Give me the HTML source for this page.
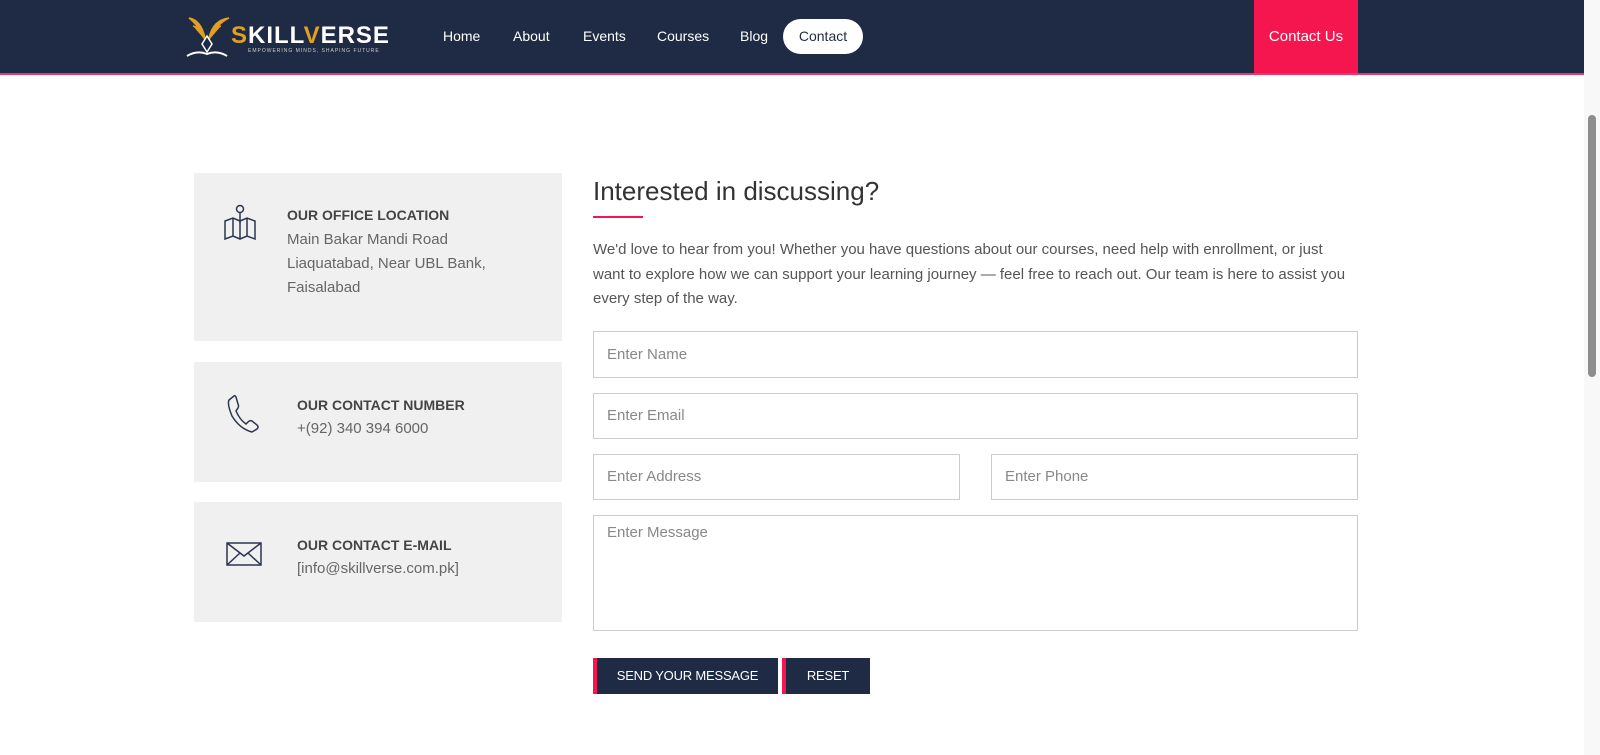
<!DOCTYPE html>
<html><head><meta charset="utf-8"><style>
*{box-sizing:border-box;margin:0;padding:0}
body{width:1600px;height:755px;overflow:hidden;background:#fff;font-family:"Liberation Sans",sans-serif;position:relative}
.nav{position:absolute;left:0;top:0;width:1584px;height:75px;background:#1f2a44;border-bottom:2px solid #e8386a}
.nav a{position:absolute;top:28px;color:#fff;font-size:14px;text-decoration:none}
.pill{position:absolute;left:783px;top:19px;width:80px;height:35px;background:#fff;border-radius:18px;color:#1f2a44;font-size:14px;text-align:center;line-height:35px}
.cu{position:absolute;left:1254px;top:0;width:104px;height:73px;background:#f5154f;color:#fff;font-size:15px;text-align:center;line-height:73px}
.sb{position:absolute;left:1584px;top:0;width:16px;height:755px;background:#f8f8f8}
.th{position:absolute;left:1588px;top:115px;width:8px;height:262px;background:#8e8e8e;border-radius:4px}
.card{position:absolute;left:194px;width:368px;background:#f0f0f0}
.card h4{position:absolute;font-size:14px;font-weight:bold;color:#444}
.card p{position:absolute;font-size:15px;color:#666;line-height:24px}
.card svg{position:absolute}
.f{position:absolute;border:1px solid #ccc;background:#fff;font-size:15px;color:#888;padding-left:13px}
.btn{position:absolute;top:658px;height:36px;background:#1f2a44;border-left:4px solid #f5154f;color:#fff;font-size:13px;text-align:center;line-height:36px;letter-spacing:-0.2px}
</style></head><body>
<div class="nav">
<svg style="position:absolute;left:185px;top:14px" width="45" height="44" viewBox="0 0 45 44"><path d="M4 4 Q16 6 20 24 Q12 10 4 4Z M24 24 Q28 6 44 4 Q32 10 24 24Z M8 12 Q16 14 20 26 M36 12 Q28 14 24 26" fill="#e0a020" stroke="#e0a020" stroke-width="1.5"/><path d="M22 22 L27 30 L22 38 L17 30Z" fill="none" stroke="#fff" stroke-width="1.5"/><path d="M2 42 Q12 36 22 40 Q32 36 42 42" fill="none" stroke="#fff" stroke-width="2"/></svg>
<div style="position:absolute;left:231px;top:22px;font-size:24px;font-weight:bold;letter-spacing:1px;color:#fff"><span style="color:#e0a020">S</span>KILL<span style="color:#e0a020">V</span>ERSE</div>
<div style="position:absolute;left:248px;top:48px;font-size:5px;color:#ccc;letter-spacing:1px">EMPOWERING MINDS, SHAPING FUTURE</div>
<a style="left:443px">Home</a><a style="left:513px">About</a><a style="left:583px">Events</a><a style="left:657px">Courses</a><a style="left:740px">Blog</a>
<div class="pill">Contact</div>
<div class="cu">Contact Us</div>
</div>
<div class="sb"></div><div class="th"></div>

<div class="card" style="top:173px;height:168px">
<svg style="left:28px;top:30px" width="36" height="40" viewBox="0 0 36 40" fill="none" stroke="#2b3550" stroke-width="1.5"><circle cx="18" cy="6" r="3.5"/><path d="M18 10V20"/><path d="M3 18L11 15L18 18L25 15L33 18V36L25 33L18 36L11 33L3 36Z M11 15V33 M18 18V36 M25 15V33"/></svg>
<h4 style="left:93px;top:34px">OUR OFFICE LOCATION</h4>
<p style="left:93px;top:55px">Main Bakar Mandi Road<br>Liaquatabad, Near UBL Bank,<br>Faisalabad</p>
</div>
<div class="card" style="top:362px;height:120px">
<svg style="left:32px;top:32px" width="36" height="40" viewBox="0 0 36 40" fill="none" stroke="#2b3550" stroke-width="1.5"><path d="M8 2L3 6Q1 10 6 22Q14 35 26 38L31 35Q33 33 31 31L26 27Q24 26 22 28L20 30Q14 26 10 17L12 14Q13 12 12 10L10 3Q9 1 8 2Z"/></svg>
<h4 style="left:103px;top:35px">OUR CONTACT NUMBER</h4>
<p style="left:103px;top:55px">+(92) 340 394 6000</p>
</div>
<div class="card" style="top:502px;height:120px">
<svg style="left:32px;top:40px" width="36" height="26" viewBox="0 0 36 26" fill="none" stroke="#2b3550" stroke-width="1.5"><rect x="1" y="1" width="34" height="22"/><path d="M1 1L18 14L35 1 M1 23L14 11 M35 23L22 11"/></svg>
<h4 style="left:103px;top:35px">OUR CONTACT E-MAIL</h4>
<p style="left:103px;top:55px">[info@skillverse.com.pk]</p>
</div>

<div style="position:absolute;left:593px;top:176px;font-size:26px;color:#333">Interested in discussing?</div>
<div style="position:absolute;left:593px;top:216px;width:50px;height:2px;background:#f5154f"></div>
<div style="position:absolute;left:593px;top:238px;width:760px;font-size:15px;line-height:24.5px;color:#555">We'd love to hear from you! Whether you have questions about our courses, need help with enrollment, or just want to explore how we can support your learning journey — feel free to reach out. Our team is here to assist you every step of the way.</div>
<div class="f" style="left:593px;top:331px;width:765px;height:47px;line-height:45px">Enter Name</div>
<div class="f" style="left:593px;top:393px;width:765px;height:46px;line-height:44px">Enter Email</div>
<div class="f" style="left:593px;top:454px;width:367px;height:46px;line-height:44px">Enter Address</div>
<div class="f" style="left:991px;top:454px;width:367px;height:46px;line-height:44px">Enter Phone</div>
<div class="f" style="left:593px;top:515px;width:765px;height:116px;padding-top:8px">Enter Message</div>
<div class="btn" style="left:593px;width:185px">SEND YOUR MESSAGE</div>
<div class="btn" style="left:782px;width:88px">RESET</div>
</body></html>
